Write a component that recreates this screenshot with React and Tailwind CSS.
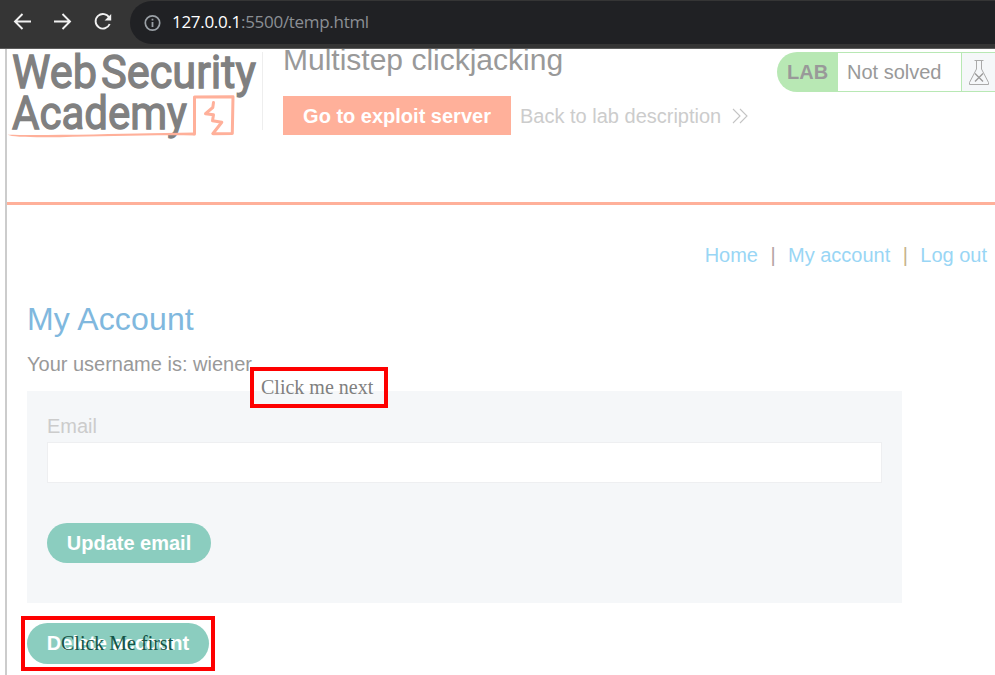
function BrowserBar() {
  return (
    <div className="flex h-[49px] shrink-0 items-start border-b border-[#5c5c5c] bg-[#353535]">
      <svg className="h-12 w-[130px] shrink-0" viewBox="0 0 130 48" fill="none" stroke="#f1f1f1" strokeWidth="1.9">
        <path d="M31 21.500H15.500M22.500 14L15 21.500L22.500 29" />
        <path d="M54 21.500H69.500M62.500 14L70 21.500L62.500 29" />
        <path d="M109.300 17.700A7.300 7.300 0 1 0 109.700 24" />
        <path d="M111.200 14V20.600H104.600Z" fill="#f1f1f1" stroke="none" />
      </svg>
      <div className="mt-px flex h-[43px] flex-1 items-center rounded-l-full bg-[#202124] pl-[14px]">
        <svg className="h-[18px] w-[18px]" viewBox="0 0 18 18" fill="none" stroke="#9aa0a6" strokeWidth="1.7">
          <circle cx="8.500" cy="9" r="7.200" />
          <path d="M8.500 8V13M8.500 4.800V6.500" strokeWidth="1.8" />
        </svg>
        <span className="ml-[10px] -mt-px whitespace-nowrap font-['Open_Sans',sans-serif] text-[17px] leading-[24px] tracking-[-0.3px] text-[#8b8f94]">
          <span className="text-white">127.0.0.1</span>:5500/temp.html
        </span>
      </div>
    </div>
  );
}

function Logo() {
  return (
    <svg className="h-[92px] w-[255px] shrink-0" viewBox="7 49 255 92">
      <g fill="#808080" stroke="#808080" strokeWidth="1.300" fontFamily="Roboto, sans-serif" fontWeight="400" fontSize="47">
        <text x="12" y="87.500" textLength="85" lengthAdjust="spacingAndGlyphs">Web</text>
        <text x="101" y="87.500" textLength="155" lengthAdjust="spacingAndGlyphs">Security</text>
        <text x="12" y="128.500" textLength="175" lengthAdjust="spacingAndGlyphs">Academy</text>
      </g>
      <path d="M7.500 134.800C50 135.500 110 134 150 133.200L194.500 132.500V135.500C150 134.800 100 136.500 60 137.200C30 137.600 12 137 7.500 134.800Z" fill="#ffb09a" />
      <g fill="none" stroke="#ffb09a" strokeWidth="3" strokeLinejoin="round" strokeLinecap="round">
        <path d="M194.500 134L194.500 97L233 96.800L232.300 133.500L213 133.800" />
        <path d="M213 133.500L221.800 122.300L212.500 120.800L213.500 114.800L205.500 113.700L212.800 107.500L213.500 102.500" />
      </g>
    </svg>
  );
}

function LabStatus() {
  return (
    <div className="mt-[3px] flex h-10 w-[218px] text-[20px] leading-[40px]">
      <div className="w-[61px] rounded-l-full bg-[#b8e8b4] pl-[10px] font-bold text-[#999]">LAB</div>
      <div className="w-[124px] border-y border-r border-[#b8e8b4] pl-[9px] leading-[38px] text-[#999]">Not solved</div>
      <div className="flex-1 border-y border-[#b8e8b4] bg-[#f5f7f9]">
        <svg className="h-[38px] w-[33px]" viewBox="962 53 33 38" fill="none" stroke="#aaa" strokeWidth="1">
          <path d="M974.500 60.500H983.500M976.500 60.500V69L969.500 82.500V84.500H988.500V82.500L981.500 69V60.500" />
          <path d="M975 73.500L983 81.500M983 73.500L975 81.500" stroke="#999" strokeWidth="1.300" />
        </svg>
      </div>
    </div>
  );
}

function Header() {
  return (
    <header className="flex h-[156px] border-b-[3px] border-[#ffb09a]">
      <Logo />
      <div className="mt-[3px] h-[78px] w-px bg-[#eee]" />
      <div className="ml-5 flex w-[494px] flex-col">
        <h1 className="-mt-[7px] whitespace-nowrap text-[30px] leading-[36px] text-[#999]">Multistep clickjacking</h1>
        <div className="mt-[18px] flex items-center">
          <button className="h-[39px] w-[228px] bg-[#ffb09a] font-bold text-white">Go to exploit server</button>
          <a className="ml-[9px] whitespace-nowrap text-[#ccc]">Back to lab description</a>
          <svg className="ml-[11px] h-4 w-4" viewBox="0 0 16 16" fill="none" stroke="#c4c4c4" strokeWidth="1.100">
            <path d="M1 1L8 8L1 15M8 1L15 8L8 15" />
          </svg>
        </div>
      </div>
      <LabStatus />
    </header>
  );
}

export default function App() {
  return (
    <div className="relative flex h-[675px] w-[995px] flex-col overflow-hidden bg-white">
      <BrowserBar />
      <div className="ml-[5px] flex-1 overflow-hidden border-l-2 border-[#ccc] font-['Liberation_Sans',Arial,sans-serif] text-[20px] leading-[24px]">
        <Header />
        <nav className="mt-[38px] flex justify-end pr-[8px] text-[#99d6f5]">
          <a>Home</a>
          <span className="w-[30px] text-center text-[#b5a4a4]">|</span>
          <a>My account</a>
          <span className="w-[30px] text-center text-[#c7b48c]">|</span>
          <a>Log out</a>
        </nav>
        <main className="pl-5">
          <h2 className="mt-[34px] text-[32px] leading-[36px] tracking-[0.15px] text-[#80b8de]">My Account</h2>
          <p className="mt-[15px] text-[#999]">Your username is: wiener</p>
          <form className="mt-[15px] h-[212px] w-[875px] bg-[#f5f7f9] px-5 pt-[23px]">
            <label className="block text-[#ccc]">Email</label>
            <div className="mt-[4px] h-[41px] w-[835px] border border-[#eeeff1] bg-white" />
            <button type="button" className="mt-10 h-10 w-[164px] rounded-full bg-[#8bcdbf] font-bold text-white">Update email</button>
          </form>
          <button className="mt-5 block h-[41px] w-[182px] rounded-full bg-[#8bcdbf] pb-[2px] font-bold text-white">Delete account</button>
        </main>
      </div>
      <div className="absolute left-[250px] top-[367px] h-[41px] w-[138px] whitespace-nowrap border-4 border-[#fe0000] pl-[7px] font-['Liberation_Serif',serif] text-[20px] leading-[32px] text-[#808080]">Click me next</div>
      <div className="absolute left-[21px] top-[616px] h-[55px] w-[194px] whitespace-nowrap border-4 border-[#fe0000] pl-[36px] font-['Liberation_Serif',serif] text-[20px] leading-[46px] text-[#155346]">Click Me first</div>
    </div>
  );
}
